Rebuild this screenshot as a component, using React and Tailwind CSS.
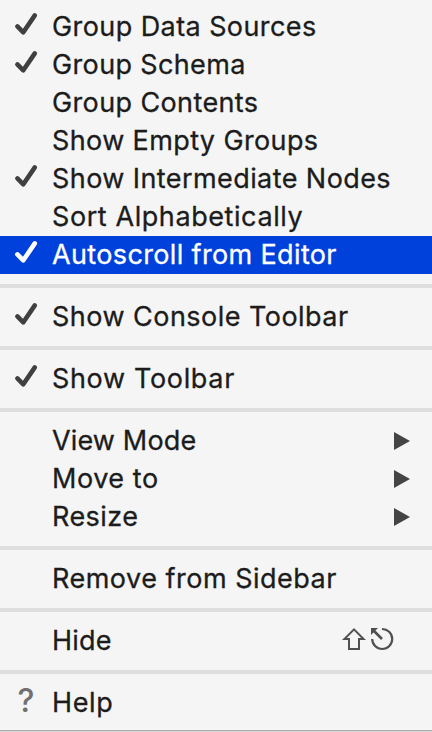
function Check() {
  return (
    <svg className="block h-[38px] w-[52px] shrink-0" viewBox="0 0 52 38" fill="none">
      <path d="M17.4 18.4L23.3 24.3L34.8 7.4" stroke="currentColor" strokeWidth="4.6" strokeLinecap="round" strokeLinejoin="round" />
    </svg>
  );
}

function Arrow() {
  return (
    <svg className="ml-auto mr-[22px] block h-[38px] w-4 shrink-0" viewBox="0 0 16 38">
      <path d="M0 10V28L16 19Z" fill="#444" />
    </svg>
  );
}

function Shortcut() {
  return (
    <svg className="ml-auto mr-[37px] block h-[38px] w-[53px] shrink-0" viewBox="0 0 53 38" fill="none" stroke="#505050" strokeWidth="2">
      <path d="M12 7.4L2.4 17H7V27H17V17H21.6Z" />
      <path d="M40 7A10 10 0 1 1 30.2 17" strokeWidth="2.2" />
      <path d="M40 17L31.5 8.5" strokeWidth="2.6" />
      <path d="M29 6H36L29 13Z" fill="#505050" stroke="none" />
    </svg>
  );
}

function Item({ label, spacing = "tracking-[0.2px]", checked, active, submenu, shortcut, help }) {
  return (
    <div className={`flex h-[38px] shrink-0 items-center ${active ? "bg-[#0041dc] text-white" : "text-[#1c1c1c]"}`}>
      {checked ? (
        <span className={active ? "text-white" : "text-[#404040]"}>
          <Check />
        </span>
      ) : (
        <span className="w-[52px] shrink-0 pb-1 text-center text-[32px] leading-[34px] font-medium text-[#707070]">{help ? "?" : ""}</span>
      )}
      <span className={`text-[27px] leading-[38px] whitespace-nowrap [-webkit-text-stroke:0.3px_currentColor] ${spacing}`}>{label}</span>
      {submenu && <Arrow />}
      {shortcut && <Shortcut />}
    </div>
  );
}

function Separator() {
  return <div className="my-2.5 h-1 shrink-0 bg-[#dedede]" />;
}

export default function App() {
  return (
    <div className="flex h-[732px] w-[432px] flex-col overflow-hidden bg-[#f5f5f5] pt-2 font-['Inter',sans-serif]">
      <Item label="Group Data Sources" spacing="tracking-[0.42px]" checked />
      <Item label="Group Schema" spacing="tracking-[0.36px]" checked />
      <Item label="Group Contents" spacing="tracking-[0.38px]" />
      <Item label="Show Empty Groups" spacing="tracking-[0.38px]" />
      <Item label="Show Intermediate Nodes" spacing="tracking-[0.42px]" checked />
      <Item label="Sort Alphabetically" spacing="tracking-[0.58px]" />
      <Item label="Autoscroll from Editor" spacing="tracking-[0.36px]" checked active />
      <Separator />
      <Item label="Show Console Toolbar" spacing="tracking-[0.47px]" checked />
      <Separator />
      <Item label="Show Toolbar" spacing="tracking-[0.66px]" checked />
      <Separator />
      <Item label="View Mode" spacing="tracking-[0.15px]" submenu />
      <Item label="Move to" spacing="tracking-[0.55px]" submenu />
      <Item label="Resize" spacing="tracking-[0.45px]" submenu />
      <Separator />
      <Item label="Remove from Sidebar" spacing="tracking-[0.5px]" />
      <Separator />
      <Item label="Hide" shortcut />
      <Separator />
      <Item label="Help" spacing="tracking-[0.6px]" help />
      <div className="mt-2 h-px bg-[#acacac]" />
      <div className="h-px bg-[#d8d8d8]" />
    </div>
  );
}
